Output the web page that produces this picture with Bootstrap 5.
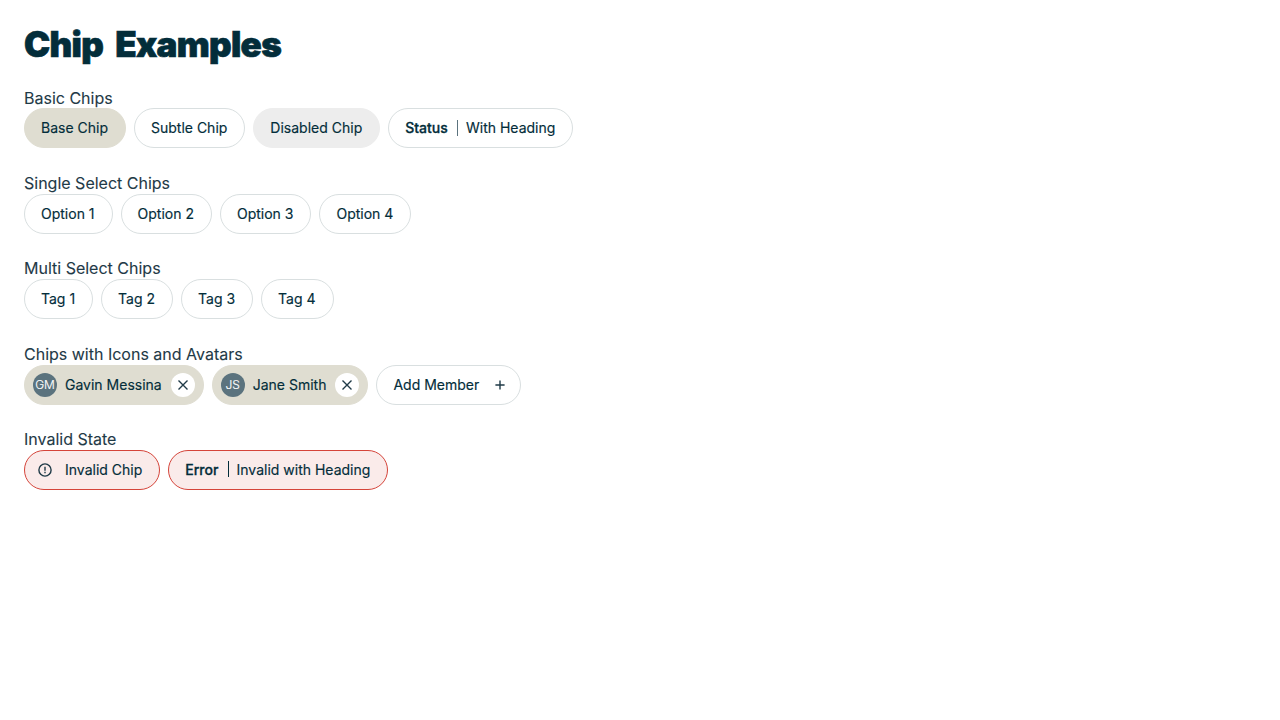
<!DOCTYPE html>
<html lang="en">
<head>
<meta charset="utf-8">
<meta name="viewport" content="width=device-width, initial-scale=1">
<title>Chip Examples</title>
<link href="https://cdn.jsdelivr.net/npm/bootstrap@5.3.0/dist/css/bootstrap.min.css" rel="stylesheet">
<style>
body{font-family:Inter,sans-serif;color:#1f3a47;background:#fff}
h1{font-weight:900;font-size:35px;line-height:40px;letter-spacing:-.7px;word-spacing:6px;color:#032d3a;margin-bottom:23.12px;-webkit-text-stroke:.7px #032d3a}
.stack{gap:24px}
.chip-label{padding-top:.5px;padding-bottom:.875px;line-height:20px;-webkit-text-stroke:.1px currentColor}
.chip{height:40px;border:1px solid #d9dfe0;border-radius:20px;background:#fff;color:#032d3a;font-size:14px;line-height:20px;padding:0 17px 0 16px;white-space:nowrap;-webkit-text-stroke:.15px currentColor}
.chip-base{background:#dfddd1;border-color:#dfddd1}
.chip-off{background:#ededed;border-color:#ededed}
.chip-invalid{background:#faebea;border-color:#d5443a}
.chip-heading{font-weight:500;-webkit-text-stroke:.3px currentColor}
.chip-rule{width:1px;height:16px;background:#5b737e;margin:0 8px 0 9.2px}
.chip-invalid .chip-rule{background:#032d3a;margin-top:-2px}
.chip-member{padding:0 8px}
.chip-add{padding-right:15px}
.chip-alert{padding-left:13px}
.chip-alert svg{margin-right:13px}
.avatar{width:24px;height:24px;background:#5b737e;color:#fff;font-size:12px;font-weight:300;line-height:24px}
.close-dot{width:24px;height:24px;background:#fff;border:0;padding:0;margin-left:9px}
svg{display:block;fill:none;stroke:#1f3a47;stroke-width:1.4}
</style>
</head>
<body>
<main class="p-4">
<h1>Chip Examples</h1>
<div class="stack d-flex flex-column">
<section><div class="chip-label">Basic Chips</div>
<div class="d-flex gap-2">
<button class="chip chip-base">Base Chip</button>
<button class="chip">Subtle Chip</button>
<button class="chip chip-off">Disabled Chip</button>
<button class="chip d-flex align-items-center"><span class="chip-heading">Status</span><span class="chip-rule"></span><span>With Heading</span></button>
</div></section>
<section><div class="chip-label">Single Select Chips</div>
<div class="d-flex gap-2">
<button class="chip">Option 1</button><button class="chip">Option 2</button><button class="chip">Option 3</button><button class="chip">Option 4</button>
</div></section>
<section><div class="chip-label">Multi Select Chips</div>
<div class="d-flex gap-2">
<button class="chip">Tag 1</button><button class="chip">Tag 2</button><button class="chip">Tag 3</button><button class="chip">Tag 4</button>
</div></section>
<section><div class="chip-label">Chips with Icons and Avatars</div>
<div class="d-flex gap-2">
<div class="chip chip-base chip-member d-flex align-items-center"><span class="avatar rounded-circle text-center me-2">GM</span><span>Gavin Messina</span><button class="close-dot rounded-circle d-flex align-items-center justify-content-center" aria-label="Remove"><svg width="12" height="12"><path d="M1.5 1.5l9 9M10.5 1.5l-9 9"/></svg></button></div>
<div class="chip chip-base chip-member d-flex align-items-center"><span class="avatar rounded-circle text-center me-2">JS</span><span>Jane Smith</span><button class="close-dot rounded-circle d-flex align-items-center justify-content-center" aria-label="Remove"><svg width="12" height="12"><path d="M1.5 1.5l9 9M10.5 1.5l-9 9"/></svg></button></div>
<button class="chip chip-add d-flex align-items-center"><span>Add Member</span><svg class="ms-3" width="10" height="10"><path d="M5 .4v9.2M.4 5h9.2"/></svg></button>
</div></section>
<section><div class="chip-label">Invalid State</div>
<div class="d-flex gap-2">
<button class="chip chip-invalid chip-alert d-flex align-items-center"><svg width="14" height="14"><circle cx="7" cy="7" r="6.1"/><path d="M7 3.7v4M7 8.8v1.4"/></svg><span>Invalid Chip</span></button>
<button class="chip chip-invalid d-flex align-items-center"><span class="chip-heading">Error</span><span class="chip-rule"></span><span>Invalid with Heading</span></button>
</div></section>
</div>
</main>
<script src="https://cdn.jsdelivr.net/npm/bootstrap@5.3.0/dist/js/bootstrap.bundle.min.js"></script>
</body>
</html>
